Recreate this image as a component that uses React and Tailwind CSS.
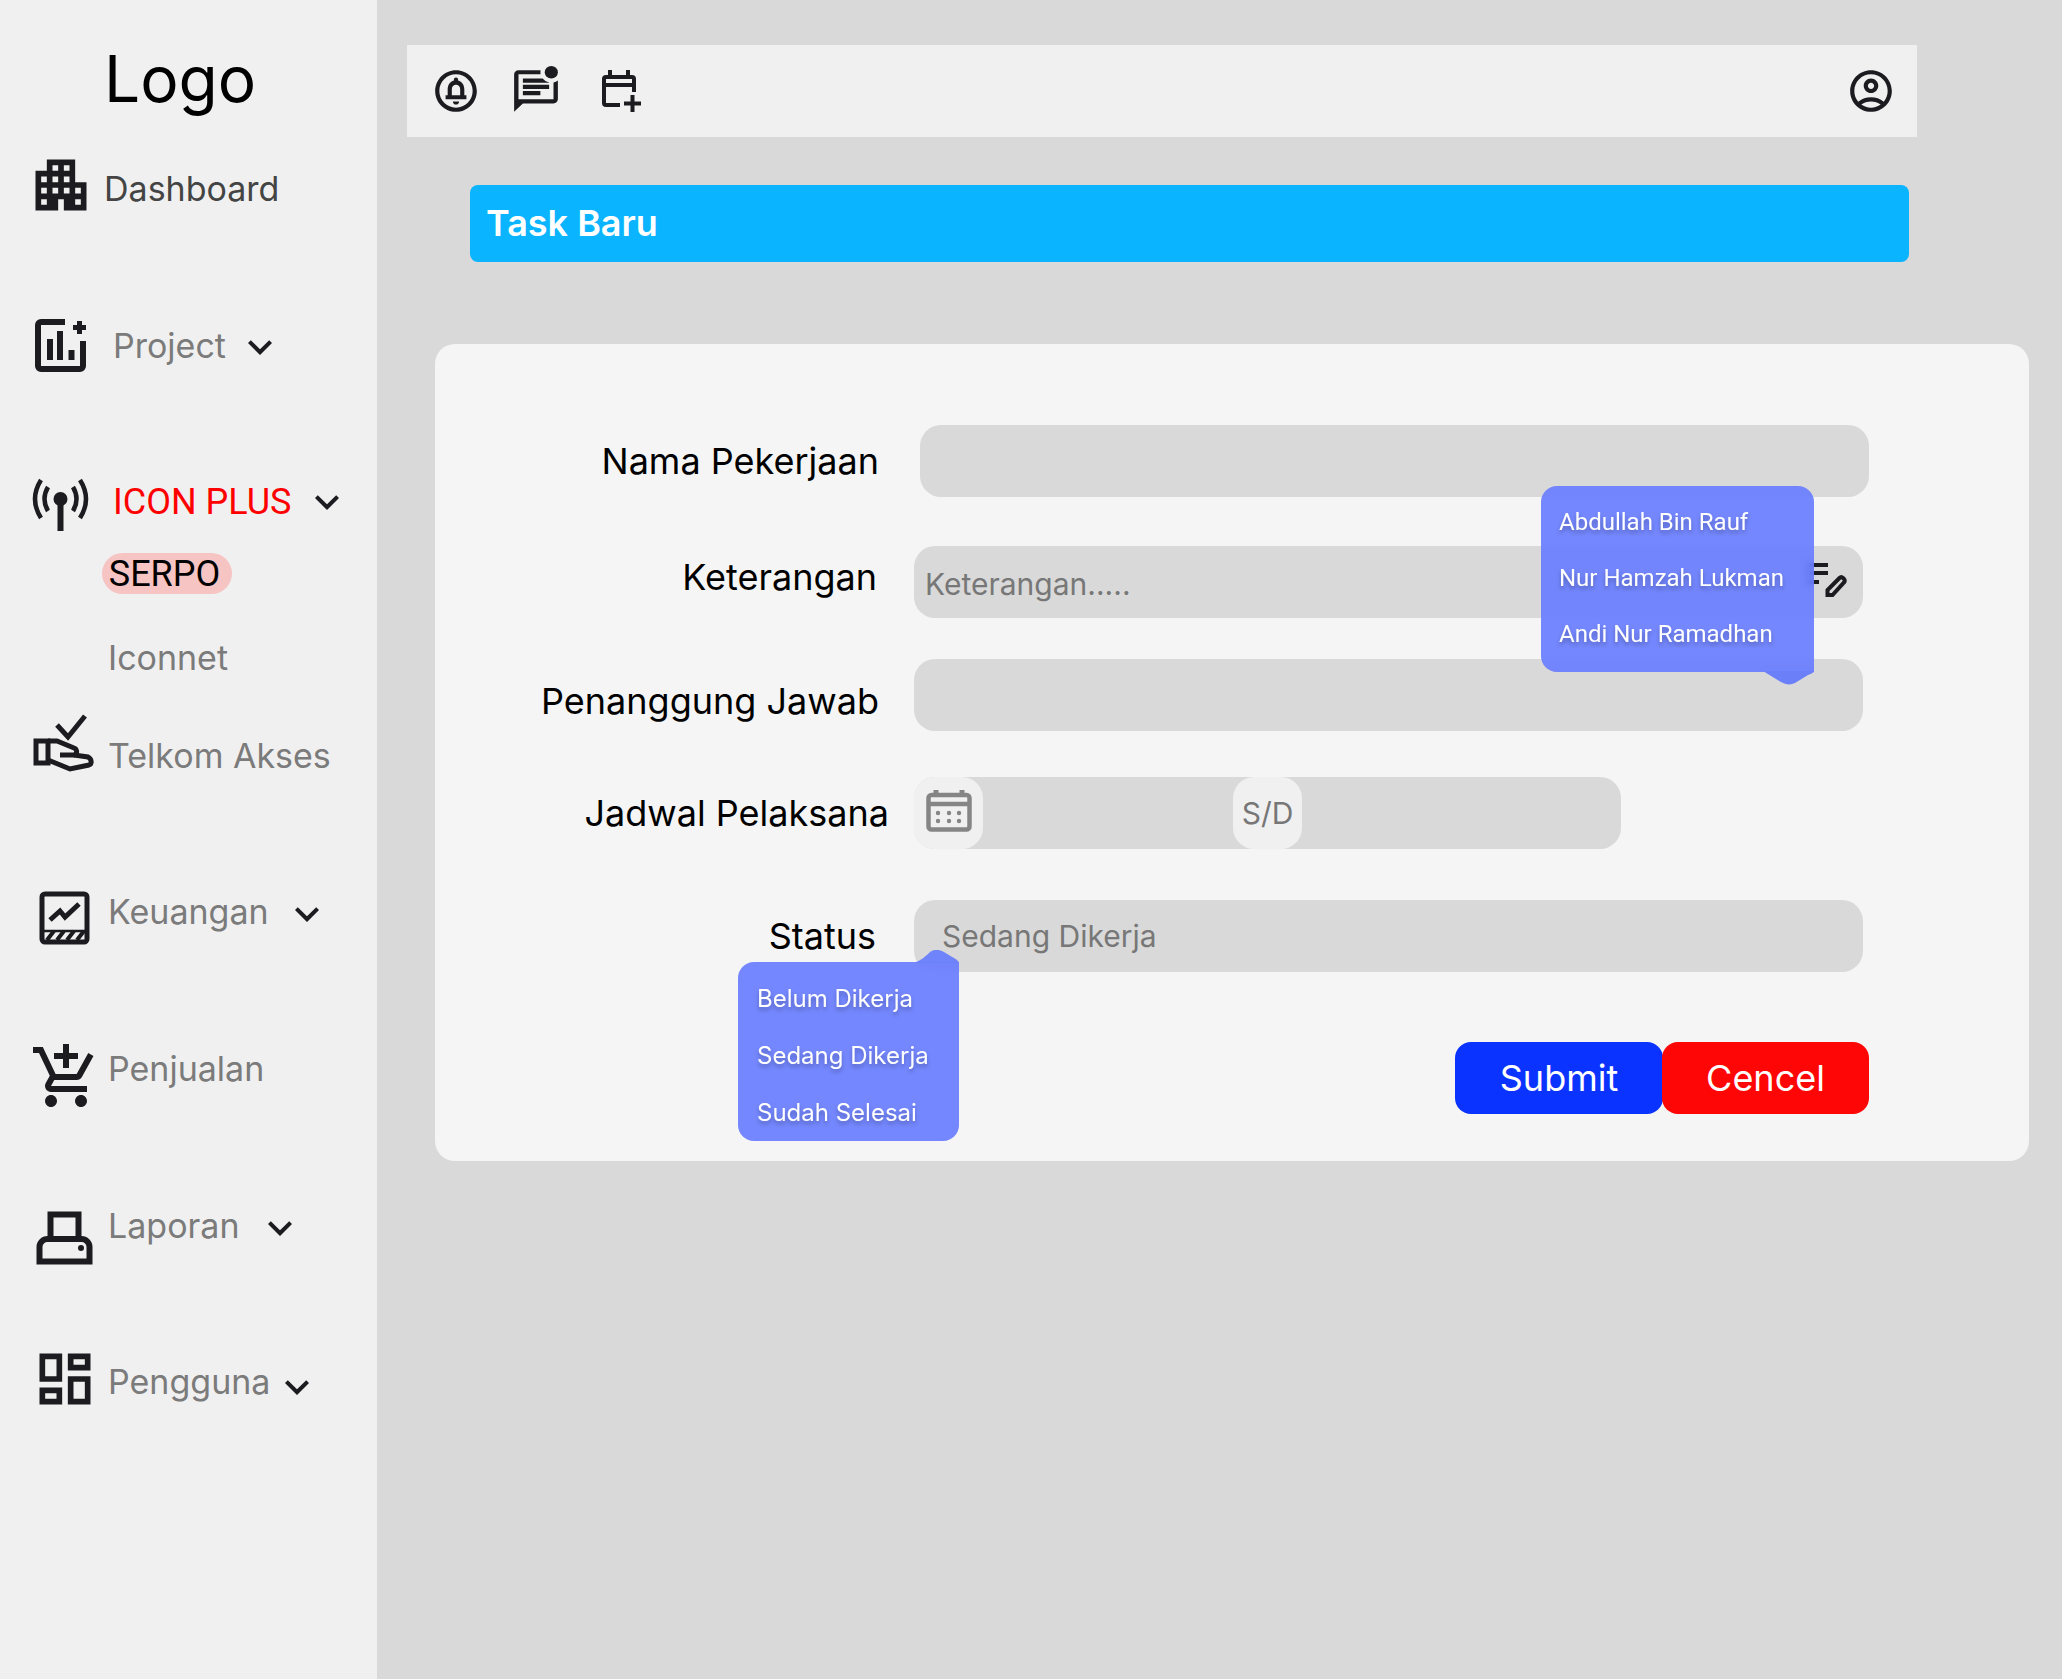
import {
  MdApartment,
  MdOutlineAddShoppingCart,
  MdOutlineDashboard,
  MdKeyboardArrowDown,
  MdOutlineCircleNotifications,
  MdOutlineMarkUnreadChatAlt,
  MdOutlineAccountCircle,
} from 'react-icons/md';

const INK = '#1c1b1f';

function ChartAddIcon({ className }) {
  return (
    <svg width="52" height="53" viewBox="0 0 52 53" fill="none" stroke={INK} strokeWidth="6" className={className}>
      <path d="M30 3H6a3 3 0 0 0-3 3v41a3 3 0 0 0 3 3h39a3 3 0 0 0 3-3V22" />
      <path d="M38 8.500h13M44.500 2v13" strokeWidth="5" />
      <path d="M15 20v21M25 12v29M36.500 31v10" />
    </svg>
  );
}

function AntennaIcon({ className }) {
  return (
    <svg width="60" height="56" viewBox="0 0 60 56" fill="none" stroke={INK} strokeWidth="4.5" className={className}>
      <path d="M18 10Q11 22 18 34M11 3Q-1 22 11 41M43 10Q50 22 43 34M50 3Q62 22 50 41" />
      <circle cx="30.5" cy="22" r="7" fill={INK} stroke="none" />
      <path d="M30.5 22v32" strokeWidth="6" />
    </svg>
  );
}

function HandCheckIcon({ className }) {
  return (
    <svg width="80" height="75" viewBox="0 0 80 75" fill="none" stroke={INK} strokeWidth="5" className={className}>
      <path d="M32 20l11 12 17-21" />
      <rect x="11" y="36" width="12" height="22" />
      <path d="M23 36h9l17 7c3 1 4 6 0 7H35" />
      <path d="M23 55l22 9 19-4c3-1 3-6-1-8l-14-2" />
    </svg>
  );
}

function ChartFrameIcon({ className }) {
  return (
    <svg width="70" height="65" viewBox="0 0 70 65" fill="none" stroke={INK} className={className}>
      <rect x="12" y="9" width="45" height="48" rx="3" strokeWidth="5" />
      <path d="M20 35l10-9 5 6 14-13" strokeWidth="5" />
      <path d="M14 46h41" strokeWidth="2.5" />
      <path d="M17 55l7-9M27 55l7-9M37 55l7-9M47 55l7-9" strokeWidth="4" />
    </svg>
  );
}

function PrinterIcon({ className }) {
  return (
    <svg width="70" height="65" viewBox="0 0 70 65" fill="none" stroke={INK} strokeWidth="6" className={className}>
      <path d="M20.5 33V9.5h28V33" />
      <path d="M9.5 56.5V42a8 8 0 0 1 8-8h34a8 8 0 0 1 8 8v14.5z" />
      <circle cx="51" cy="43" r="3" fill={INK} stroke="none" />
    </svg>
  );
}

function CalendarAddIcon({ className }) {
  return (
    <svg width="50" height="50" viewBox="0 0 50 50" fill="none" stroke={INK} strokeWidth="4" className={className}>
      <path d="M20 37H6a2 2 0 0 1-2-2V11a2 2 0 0 1 2-2h26a2 2 0 0 1 2 2v13" />
      <path d="M4 17h30M10 2v6M28 2v6" />
      <path d="M24 35.5h17M32.5 27v17" />
    </svg>
  );
}

function CalendarIcon() {
  return (
    <svg width="46" height="42" viewBox="0 0 46 42" fill="none" stroke="#858585" strokeWidth="4.5" className="mb-[4px]">
      <rect x="2.500" y="5" width="41" height="34.500" rx="3" />
      <path d="M2 14h42" strokeWidth="4.5" />
      <path d="M10 0v6M36 0v6" strokeWidth="5" />
      <g fill="#858585" stroke="none">
        <circle cx="12" cy="23" r="2.200" />
        <circle cx="23" cy="23" r="2.200" />
        <circle cx="33" cy="23" r="2.200" />
        <circle cx="12" cy="31" r="2.200" />
        <circle cx="23" cy="31" r="2.200" />
        <circle cx="33" cy="31" r="2.200" />
      </g>
    </svg>
  );
}

function NotePenIcon() {
  return (
    <svg width="50" height="50" viewBox="0 0 50 50" fill="none" stroke={INK} className="mr-[2px]">
      <path d="M8 8h22M8 16h22M8 25h13" strokeWidth="4" />
      <path d="M29.500 38v-5l12-12c1-1 2.500-1 3.500 0l1 1c1 1 1 2.500 0 3.500L34.500 38z" strokeWidth="4" />
    </svg>
  );
}

function Chevron({ className }) {
  return <MdKeyboardArrowDown size={48} color={INK} className={`shrink-0 ${className}`} />;
}

function Sidebar() {
  return (
    <aside className="w-[377px] shrink-0 bg-[#f0f0f0] font-['Inter',sans-serif] text-[34px] text-[#7b7b7b]">
      <div className="h-[158px] pl-[104px] pt-[40px] text-[64px] leading-[77px] text-black">Logo</div>

      <div className="flex h-[60px] items-center">
        <div className="w-[104px] shrink-0">
          <MdApartment size={68} color={INK} className="mb-[6px] ml-[27px]" />
        </div>
        <span className="text-[#444444]">Dashboard</span>
      </div>

      <div className="mt-[97px] flex h-[60px] items-center">
        <div className="w-[113px] shrink-0">
          <ChartAddIcon className="ml-[35px]" />
        </div>
        <span>Project</span>
        <Chevron className="ml-[10px] mt-[4px]" />
      </div>

      <div className="mt-[97px] flex h-[60px] items-center">
        <div className="w-[113px] shrink-0">
          <AntennaIcon className="ml-[30px] mt-[6px]" />
        </div>
        <span className="font-['Roboto',sans-serif] text-[36px] text-[#ff0000]">ICON PLUS</span>
        <Chevron className="ml-[12px]" />
      </div>

      <div className="ml-[102px] mt-[21px] flex h-[41px] w-[130px] items-center justify-center rounded-full bg-[#f7c4c4] pr-[5px] font-['Roboto',sans-serif] text-[36px] text-black">
        SERPO
      </div>

      <div className="mt-[33px] flex h-[60px] items-center pl-[108px]">Iconnet</div>

      <div className="mt-[38px] flex h-[60px] items-center">
        <div className="w-[108px] shrink-0">
          <HandCheckIcon className="mb-[25px] ml-[25px]" />
        </div>
        <span>Telkom Akses</span>
      </div>

      <div className="mt-[96px] flex h-[60px] items-center">
        <div className="w-[108px] shrink-0">
          <ChartFrameIcon className="ml-[30px] mt-[13px]" />
        </div>
        <span>Keuangan</span>
        <Chevron className="ml-[14px] mt-[6px]" />
      </div>

      <div className="mt-[97px] flex h-[60px] items-center">
        <div className="w-[108px] shrink-0">
          <MdOutlineAddShoppingCart size={72} color={INK} className="ml-[30px] mt-[18px]" />
        </div>
        <span>Penjualan</span>
      </div>

      <div className="mt-[97px] flex h-[60px] items-center">
        <div className="w-[108px] shrink-0">
          <PrinterIcon className="ml-[30px] mt-[25px]" />
        </div>
        <span>Laporan</span>
        <Chevron className="ml-[16px] mt-[6px]" />
      </div>

      <div className="mt-[96px] flex h-[60px] items-center">
        <div className="w-[108px] shrink-0">
          <MdOutlineDashboard size={68} color={INK} className="mb-[4px] ml-[31px]" />
        </div>
        <span>Pengguna</span>
        <Chevron className="ml-[3px] mt-[12px]" />
      </div>
    </aside>
  );
}

function Topbar() {
  return (
    <header className="ml-[30px] mt-[45px] flex h-[92px] w-[1510px] items-center bg-[#f0f0f0]">
      <MdOutlineCircleNotifications size={50} color={INK} className="ml-[24px]" />
      <MdOutlineMarkUnreadChatAlt size={50} color={INK} className="ml-[30px] scale-x-[1.05]" />
      <CalendarAddIcon className="ml-[39px] mt-[3px]" />
      <MdOutlineAccountCircle size={50} color={INK} className="ml-auto mr-[21px]" />
    </header>
  );
}

function Field({ className, children }) {
  return (
    <div className={`flex h-[72px] items-center rounded-[21px] bg-[#d9d9d9] text-[30px] text-[#777777] ${className}`}>
      {children}
    </div>
  );
}

function PickList({ className, itemClass, items }) {
  return (
    <div
      className={`flex flex-col rounded-[16px] bg-[#667bff]/90 text-white backdrop-blur-[3px] [text-shadow:0_3px_4px_rgba(0,0,0,0.28)] ${className}`}
    >
      {items.map((name) => (
        <div key={name} className={itemClass}>
          {name}
        </div>
      ))}
    </div>
  );
}

function TaskForm() {
  return (
    <section className="relative ml-[58px] mt-[82px] w-[1594px] rounded-[20px] bg-[#f5f5f5] pb-[47px] pt-[81px] text-[36px] text-black">
      <div className="flex items-center">
        <label className="w-[444px] shrink-0 text-right">Nama Pekerjaan</label>
        <Field className="ml-[41px] w-[949px]" />
      </div>

      <div className="mt-[49px] flex items-center">
        <label className="mt-[-10px] w-[442px] shrink-0 text-right">Keterangan</label>
        <Field className="ml-[37px] w-[949px] justify-between pl-[11px] pr-[13px]">
          <span className="mt-[5px]">Keterangan.....</span>
          <NotePenIcon />
        </Field>
      </div>

      <div className="mt-[41px] flex items-center">
        <label className="mt-[12px] w-[444px] shrink-0 text-right">Penanggung Jawab</label>
        <Field className="ml-[35px] w-[949px]" />
      </div>

      <div className="mt-[46px] flex items-center">
        <label className="w-[454px] shrink-0 text-right">Jadwal Pelaksana</label>
        <Field className="ml-[25px] w-[707px]">
          <div className="flex h-[72px] w-[69px] items-center justify-center rounded-[21px] bg-[#f0f0f0]">
            <CalendarIcon />
          </div>
          <div className="ml-[250px] flex h-[72px] w-[69px] items-center justify-center rounded-[21px] bg-[#f0f0f0]">
            S/D
          </div>
        </Field>
      </div>

      <div className="mt-[51px] flex items-center">
        <label className="w-[441px] shrink-0 text-right">Status</label>
        <Field className="ml-[38px] w-[949px] pl-[28px]">Sedang Dikerja</Field>
      </div>

      <div className="mt-[70px] flex justify-end pr-[160px] text-white">
        <button className="h-[72px] w-[208px] rounded-[16px] bg-[#0b33ff]">Submit</button>
        <button className="ml-[-1px] h-[72px] w-[207px] rounded-[16px] bg-[#ff0606]">Cencel</button>
      </div>

      {/* assignee picker, open */}
      <div className="absolute left-[1106px] top-[142px] w-[273px]">
        <PickList
          className="h-[186px] justify-center rounded-br-none pb-[3px] font-['Roboto',sans-serif] text-[24px]"
          itemClass="flex h-[56px] items-center pl-[18px]"
          items={['Abdullah Bin Rauf', 'Nur Hamzah Lukman', 'Andi Nur Ramadhan']}
        />
        <svg width="273" height="15" viewBox="0 0 273 15" className="mt-[-1px] block">
          <path d="M222 0l18 11c5 3 10 3 14 1l13-8c4-1 6-3 6-4z" fill="#6b80f8" />
        </svg>
      </div>

      {/* status picker, open */}
      <div className="absolute left-[303px] top-[606px] w-[221px]">
        <svg width="221" height="13" viewBox="0 0 221 13" className="mb-[-1px] block">
          <path d="M176 13c6-2 12-7 15-10 4-4 10-4 15-1 8 5 15 8 15 11z" fill="#6f84fb" />
        </svg>
        <PickList
          className="h-[179px] justify-center rounded-tr-none pt-[8px] font-['Inter',sans-serif] text-[24px]"
          itemClass="flex h-[58px] items-center pl-[19px]"
          items={['Belum Dikerja', 'Sedang Dikerja', 'Sudah Selesai']}
        />
      </div>
    </section>
  );
}

export default function App() {
  return (
    <div className="flex h-[1679px] w-[2062px] overflow-hidden bg-[#d9d9d9] font-['Inter',sans-serif]">
      <Sidebar />
      <main className="flex-1">
        <Topbar />
        <div className="ml-[93px] mt-[48px] flex h-[77px] w-[1439px] items-center rounded-[8px] bg-[#0ab4ff] pb-[2px] pl-[16px] text-[36px] font-semibold text-white">
          Task Baru
        </div>
        <TaskForm />
      </main>
    </div>
  );
}
